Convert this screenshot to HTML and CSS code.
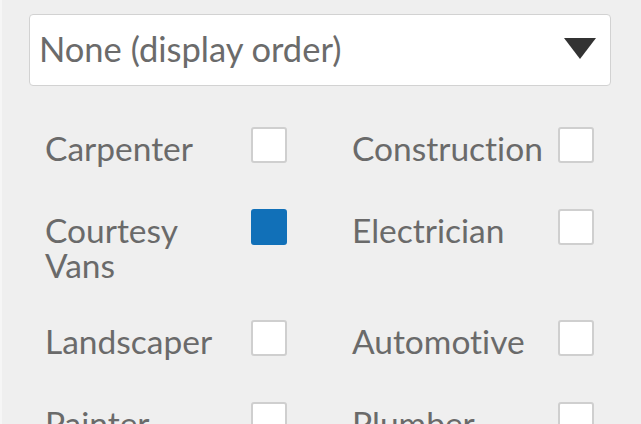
FILE: index.html
```html
<!DOCTYPE html>
<html>
<head>
<meta charset="utf-8">
<link rel="stylesheet" href="styles.css">
</head>
<body>
<div class="panel">
  <div class="select">
    <span class="select-text">None (display order)</span>
    <span class="caret"></span>
  </div>
  <div class="grid">
    <div class="item"><span class="label">Carpenter</span><span class="box"></span></div>
    <div class="item"><span class="label">Construction</span><span class="box"></span></div>
    <div class="item"><span class="label">Courtesy Vans</span><span class="box checked"></span></div>
    <div class="item"><span class="label">Electrician</span><span class="box"></span></div>
    <div class="item"><span class="label">Landscaper</span><span class="box"></span></div>
    <div class="item"><span class="label">Automotive</span><span class="box"></span></div>
    <div class="item"><span class="label">Painter</span><span class="box"></span></div>
    <div class="item"><span class="label">Plumber</span><span class="box"></span></div>
  </div>
</div>
</body>
</html>
```
FILE: styles.css
```css
html, body {
  margin: 0;
  padding: 0;
  background: #efefef;
  height: 100%;
  overflow: hidden;
}
body {
  font-family: Lato, "Open Sans", sans-serif;
  color: #6a6a6a;
  font-variant-ligatures: none;
}
.panel {
  border-left: 2px solid #f6f6f6;
  padding: 14px 31px 0 27px;
}
.select {
  box-sizing: border-box;
  height: 72px;
  width: 582px;
  background: #fff;
  border: 1px solid #d2d2d2;
  border-radius: 4px;
  display: flex;
  align-items: center;
  justify-content: space-between;
  padding: 0 14px 0 9px;
}
.select-text {
  font-size: 34.5px;
  color: #6b6b6b;
  margin-top: -4px;
}
.caret {
  width: 0;
  height: 0;
  border-left: 16px solid transparent;
  border-right: 16px solid transparent;
  border-top: 21px solid #333;
  margin-top: -3px;
}
.grid {
  display: grid;
  grid-template-columns: 307px 307px;
  row-gap: 37px;
  padding-left: 16px;
  margin-top: 41px;
}
.item {
  display: flex;
  align-items: flex-start;
  min-height: 45px;
}
.label {
  width: 196px;
  margin-right: 10px;
  font-size: 33.5px;
  line-height: 35px;
  padding-top: 4px;
  color: #6a6a6a;
}
.box {
  flex: none;
  box-sizing: border-box;
  width: 36px;
  height: 36px;
  background: #fff;
  border: 2px solid #cfcfcf;
  border-radius: 3px;
}
.box.checked {
  background: #1170b8;
  border-color: #1170b8;
}
```
